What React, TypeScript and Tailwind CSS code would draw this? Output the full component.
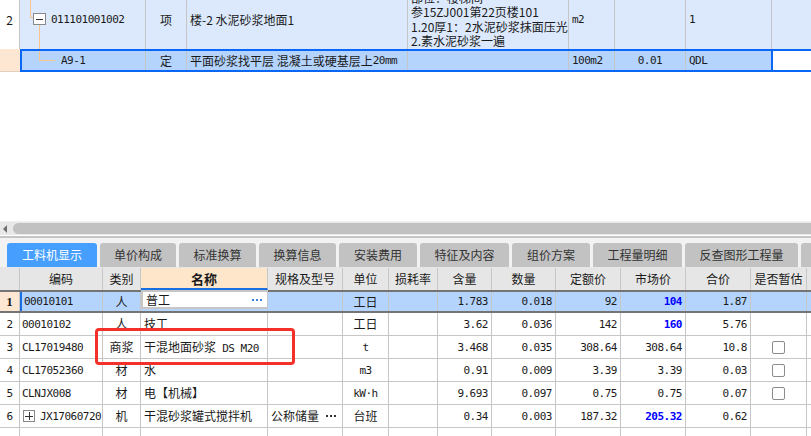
import React from 'react';

type Row = {
  n: string;
  code: string;
  plus?: boolean;
  type: string;
  name: string;
  spec?: string;
  unit: string;
  qty: string;
  amt: string;
  price: string;
  market: string;
  blue?: boolean;
  total: string;
  chk?: boolean;
};

const rows: Row[] = [
  { n: '1', code: '00010101', type: '人', name: '普工', unit: '工日', qty: '1.783', amt: '0.018', price: '92', market: '104', blue: true, total: '1.87' },
  { n: '2', code: '00010102', type: '人', name: '技工', unit: '工日', qty: '3.62', amt: '0.036', price: '142', market: '160', blue: true, total: '5.76' },
  { n: '3', code: 'CL17019480', type: '商浆', name: '干混地面砂浆 DS M20', unit: 't', qty: '3.468', amt: '0.035', price: '308.64', market: '308.64', total: '10.8', chk: true },
  { n: '4', code: 'CL17052360', type: '材', name: '水', unit: 'm3', qty: '0.91', amt: '0.009', price: '3.39', market: '3.39', total: '0.03', chk: true },
  { n: '5', code: 'CLNJX008', type: '材', name: '电【机械】', unit: 'kW·h', qty: '9.693', amt: '0.097', price: '0.75', market: '0.75', total: '0.07', chk: true },
  { n: '6', code: 'JX17060720', plus: true, type: '机', name: '干混砂浆罐式搅拌机', spec: '公称储量', unit: '台班', qty: '0.34', amt: '0.003', price: '187.32', market: '205.32', blue: true, total: '0.62' },
];

const tabs = [
  { t: '工料机显示', w: 'w-[90px]' },
  { t: '单价构成', w: 'w-[76px]' },
  { t: '标准换算', w: 'w-[77px]' },
  { t: '换算信息', w: 'w-[77px]' },
  { t: '安装费用', w: 'w-[78px]' },
  { t: '特征及内容', w: 'w-[89px]' },
  { t: '组价方案', w: 'w-[78px]' },
  { t: '工程量明细', w: 'w-[89px]' },
  { t: '反查图形工程量', w: 'w-[113px]' },
  { t: '', w: 'w-[40px]' },
];

const mono = "font-['DejaVu_Sans_Mono','Noto_Sans_CJK_SC',monospace] text-[11px] tracking-[-0.5px]";

const Checkbox = () => (
  <div className="w-[13px] h-[13px] rounded-[2px] border border-[#8c8c8c] bg-white" />
);

const Cell = ({ w, className = '', children }: { w: string; className?: string; children?: React.ReactNode }) => (
  <div className={`${w} shrink-0 h-full flex items-center border-r border-[#c6c6c6] overflow-hidden whitespace-nowrap ${className}`}>
    {children}
  </div>
);

const TopTable = () => (
  <div className="h-[72px] overflow-hidden bg-white">
    <div className="-mt-[10px]">
      {/* row 2 */}
      <div className="flex h-[59px] bg-[#dce9fc]">
        <Cell w="w-[20px]" className="bg-white justify-center">2</Cell>
        <Cell w="w-[126px]" className="relative">
          <div className="absolute left-[10px] top-0 h-[28px] w-[4px] border-l border-b border-[#f7c48a]" />
          <div className="absolute left-[19px] top-[35px] h-[25px] w-px bg-[#f7c48a]" />
          <div className="absolute left-[13px] top-[23px] w-[13px] h-[12px] border border-[#888] bg-white flex items-center justify-center">
            <div className="w-[7px] h-px bg-[#333]" />
          </div>
          <span className={`${mono} ml-[31px]`}>011101001002</span>
        </Cell>
        <Cell w="w-[41px]" className="justify-center">项</Cell>
        <Cell w="w-[221px]" className="pl-[3px]">楼-2 水泥砂浆地面1</Cell>
        <Cell w="w-[161px]" className="pl-[3px] leading-[14.5px]">
          <div className="whitespace-nowrap">
            <div>部位：楼梯间</div>
            <div>参15ZJ001第22页楼101</div>
            <div>1.20厚1：2水泥砂浆抹面压光</div>
            <div>2.素水泥砂浆一遍</div>
          </div>
        </Cell>
        <Cell w="w-[46px]" className={`${mono} pl-[3px]`}>m2</Cell>
        <Cell w="w-[71px]" />
        <Cell w="w-[86px]" className={`${mono} pl-[3px]`}>1</Cell>
        <div className="flex-1" />
      </div>
      {/* row 3 */}
      <div className="flex h-[23px]">
        <div className="w-[20px] shrink-0 bg-[#fde7d3] border-b border-[#e0d0c0]" />
        <div className="flex w-[753px] shrink-0 bg-[#b4d4fd] border-2 border-[#0a66f5]">
          <Cell w="w-[124px]" className="relative">
            <div className="absolute left-[17px] top-0 h-[10px] w-[16px] border-l border-b border-[#f7c48a]" />
            <span className={`${mono} ml-[39px]`}>A9-1</span>
          </Cell>
          <Cell w="w-[41px]" className="justify-center">定</Cell>
          <Cell w="w-[221px]" className="pl-[3px]">平面砂浆找平层 混凝土或硬基层上<span className={mono}>20mm</span></Cell>
          <Cell w="w-[161px]" />
          <Cell w="w-[46px]" className={`${mono} pl-[3px]`}>100m2</Cell>
          <Cell w="w-[71px]" className={`${mono} justify-center`}>0.01</Cell>
          <div className={`${mono} flex items-center pl-[3px] flex-1`}>QDL</div>
        </div>
        <div className="flex-1 bg-white border-y-2 border-[#0a66f5]" />
      </div>
    </div>
  </div>
);

const Scrollbar = () => (
  <div>
    <div className="h-px bg-[#f0f0f0]" />
    <div className="h-[13px] bg-[#e8e8e8] flex items-center">
      <div className="w-[10px] flex items-center justify-center">
        <div className="w-0 h-0 border-y-[4px] border-y-transparent border-r-[4px] border-r-[#6e6e6e]" />
      </div>
      <div className="flex-1 h-[11px] rounded-l-full bg-[#c1c1c1] ml-[3px]" />
    </div>
    <div className="h-px bg-white" />
    <div className="h-[2px] bg-[#c4c4c4]" />
    <div className="h-[5px] bg-[#f2f2f2]" />
  </div>
);

const Tabs = () => (
  <div className="flex h-[24px] bg-[#f2f2f2] pl-[7px] gap-[3px] overflow-hidden">
    {tabs.map((t, i) => (
      <div
        key={i}
        className={`${t.w} shrink-0 h-full rounded-t-[3px] flex items-center justify-center ${
          i === 0 ? 'bg-[#469fff] text-white' : 'bg-[#c2c2c2] text-[#333]'
        }`}
      >
        {t.t}
      </div>
    ))}
  </div>
);

const headers = ['编码', '类别', '名称', '规格及型号', '单位', '损耗率', '含量', '数量', '定额价', '市场价', '合价', '是否暂估'];
const widths = ['w-[83px]', 'w-[38px]', 'w-[127px]', 'w-[75px]', 'w-[46px]', 'w-[49px]', 'w-[54px]', 'w-[64px]', 'w-[65px]', 'w-[65px]', 'w-[65px]', 'w-[56px]'];

const Header = () => (
  <div className="flex h-[24px] bg-[#e6e6e6] border-b border-[#c6c6c6] border-t border-t-[#e6e6e6]">
    <Cell w="w-[20px]" />
    {headers.map((h, i) => (
      <Cell
        key={h}
        w={widths[i]}
        className={`justify-center ${i === 2 ? 'bg-[#fde6c9] font-bold border-b-2 border-b-[#1a6fe0] text-[13px]' : ''}`}
      >
        {h}
      </Cell>
    ))}
    <div className="flex-1" />
  </div>
);

const Dots = () => (
  <span className="flex gap-[2px] items-center">
    <span className="w-[2px] h-[2px] bg-current" />
    <span className="w-[2px] h-[2px] bg-current" />
    <span className="w-[2px] h-[2px] bg-current" />
  </span>
);

const DataRow = ({ r, sel }: { r: Row; sel: boolean }) => (
  <div
    className={`flex h-[23px] ${
      sel ? 'bg-[#b4d4fd] border-y-2 border-[#747474] -mt-px' : 'bg-white border-b border-[#c6c6c6]'
    }`}
  >
    <Cell w="w-[20px]" className={`justify-center ${sel ? 'bg-[#fde7d3] font-bold font-["Liberation_Serif",serif] text-[13px]' : mono}`}>
      {r.n}
    </Cell>
    <Cell w={widths[0]} className={`${mono} pl-[2px] ${sel ? 'border-l-2 border-l-[#1a6fe0] pl-0' : ''}`}>
      {r.plus && (
        <div className="w-[12px] h-[12px] border border-[#888] bg-white flex items-center justify-center ml-px mr-[5px] relative shrink-0">
          <div className="w-[8px] h-px bg-[#333]" />
          <div className="absolute w-px h-[8px] bg-[#333]" />
        </div>
      )}
      {r.code}
    </Cell>
    <Cell w={widths[1]} className="justify-center">{r.type}</Cell>
    <Cell
      w={widths[2]}
      className={`pl-[3px] ${sel ? 'bg-white border-2 border-[#747474] -my-[2px] h-[23px] justify-between pr-[5px]' : ''}`}
    >
      {r.n === '3' ? (
        <span>
          干混地面砂浆<span className={mono}> DS M20</span>
        </span>
      ) : (
        <span>{r.name}</span>
      )}
      {sel && (
        <span className="text-[#3b82e0]">
          <Dots />
        </span>
      )}
    </Cell>
    <Cell w={widths[3]} className="pl-[3px] gap-[7px]">
      {r.spec}
      {r.spec && (
        <span className="text-[#333]">
          <Dots />
        </span>
      )}
    </Cell>
    <Cell w={widths[4]} className={`justify-center ${/[a-z]/i.test(r.unit) ? mono : ''}`}>{r.unit}</Cell>
    <Cell w={widths[5]} />
    <Cell w={widths[6]} className={`${mono} justify-end pr-[3px]`}>{r.qty}</Cell>
    <Cell w={widths[7]} className={`${mono} justify-end pr-[3px]`}>{r.amt}</Cell>
    <Cell w={widths[8]} className={`${mono} justify-end pr-[3px]`}>{r.price}</Cell>
    <Cell w={widths[9]} className={`${mono} justify-end pr-[3px] ${r.blue ? 'text-[#0000ff] font-bold' : ''}`}>{r.market}</Cell>
    <Cell w={widths[10]} className={`${mono} justify-end pr-[3px]`}>{r.total}</Cell>
    <Cell w={widths[11]} className="justify-center">{r.chk && <Checkbox />}</Cell>
    <div className="flex-1" />
  </div>
);

export default function App() {
  return (
    <div className="w-[811px] h-[436px] overflow-hidden bg-white text-[12px] text-[#1a1a1a] font-['Noto_Sans_CJK_SC',sans-serif] leading-none relative">
      <TopTable />
      <div className="h-[149px] bg-white" />
      <Scrollbar />
      <Tabs />
      <Header />
      {rows.map((r, i) => (
        <DataRow key={r.n} r={r} sel={i === 0} />
      ))}
      <div className="flex h-[23px] bg-white">
        <Cell w="w-[20px]" />
        {widths.map((w, i) => (
          <Cell key={i} w={w} />
        ))}
      </div>
      <div className="absolute left-[95px] top-[328px] w-[200px] h-[37px] border-[3px] border-[#f4302b] rounded-[4px]" />
    </div>
  );
}
